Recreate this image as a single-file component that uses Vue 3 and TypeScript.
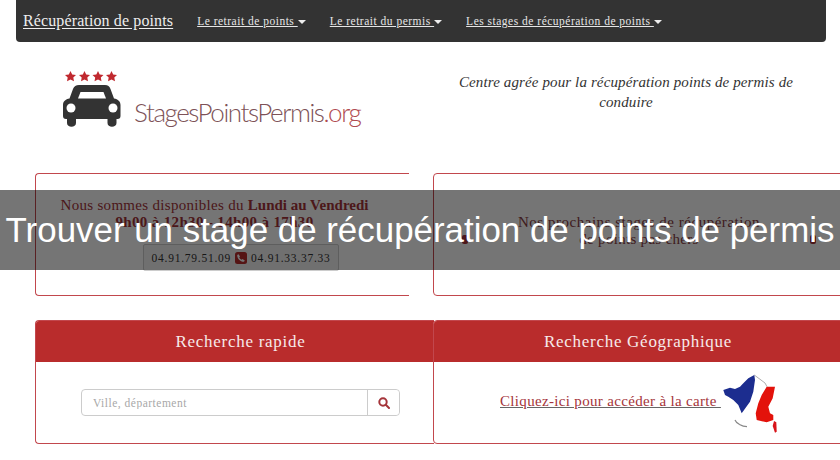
<script setup lang="ts">
const navItems: string[] = ['Le retrait de points', 'Le retrait du permis', 'Les stages de récupération de points']
</script>

<template>
  <div class="page">
    <nav class="navbar">
      <a class="brand">Récupération de points</a>
      <div v-for="item in navItems" :key="item" class="nav-item">
        <a>{{ item }}&nbsp;</a><span class="caret"></span>
      </div>
    </nav>

    <header class="head">
      <div class="logo">
        <svg class="car" width="60" height="60" viewBox="0 0 60 60">
          <g fill="#c0292f">
            <polygon v-for="x in [8.5, 22.5, 36, 49.5]" :key="x" :points="`${x},0 ${x+1.7},3.500 ${x+5.5},4 ${x+2.8},6.500 ${x+3.500},10.300 ${x},8.500 ${x-3.500},10.300 ${x-2.8},6.500 ${x-5.5},4 ${x-1.7},3.500`" />
          </g>
          <path fill="#333" d="M17 14h26c3 0 4.500 1.500 5.500 4l3.500 9.500c4 .8 6.500 3 6.500 6.500v11c0 2-1 3-3 3h-1v4c0 5-9 5-9 0v-4H14v4c0 5-9 5-9 0v-4H4c-2 0-3-1-3-3V34c0-3.500 2.500-5.700 6.500-6.500L11 18c1-2.500 3-4 6-4z" />
          <path fill="#fff" d="M18.500 21h23l2.500 6.500H16z" />
          <circle cx="9" cy="37" r="4.500" fill="#fff" />
          <circle cx="51" cy="37" r="4.500" fill="#fff" />
        </svg>
        <span class="logo-text">StagesPointsPermis<em>.org</em></span>
      </div>
      <p class="tagline">Centre agrée pour la récupération points de permis de conduire</p>
    </header>

    <section class="row first">
      <div class="panel info left">
        <h2>Nous sommes disponibles du <b>Lundi au Vendredi</b><br /><span class="hours">9h00 à 12h30 - 14h00 à 17h30</span></h2>
        <div class="phones">
          04.91.79.51.09
          <svg width="12" height="12" viewBox="0 0 12 12">
            <rect width="12" height="12" rx="2.500" fill="#b92c2c" />
            <path fill="#fff" d="M3.500 2.200 5 4.500 4.200 5.500c.5 1 1.300 1.800 2.300 2.300l1-.8 2.300 1.500-.8 1.300C5.500 10 2 6.500 2.200 3z" />
          </svg>
          04.91.33.37.33
        </div>
      </div>
      <div class="panel info right">
        <h2>Nos prochains stages de récupération</h2>
        <div class="second-line">
          <i class="mark"></i>
          <span>de points pas chers</span>
          <i class="mark"></i>
        </div>
      </div>
    </section>

    <section class="row second">
      <div class="panel search left">
        <div class="panel-head">Recherche rapide</div>
        <div class="panel-body">
          <div class="input-group">
            <input class="field" placeholder="Ville, département" />
            <button class="go" aria-label="Rechercher">
              <svg width="12" height="12" viewBox="0 0 12 12" fill="none" stroke="#a5343a" stroke-width="2">
                <circle cx="5" cy="5" r="3.700" /><path d="m7.800 7.800 3.200 3.200" stroke-linecap="round" />
              </svg>
            </button>
          </div>
        </div>
      </div>
      <div class="panel search right">
        <div class="panel-head">Recherche Géographique</div>
        <div class="panel-body map-body">
          <a class="map-link">Cliquez-ici pour accéder à la carte&nbsp;</a>
          <svg class="france" width="58" height="62" viewBox="0 0 58 62">
            <path fill="none" stroke="#999" stroke-width=".8" d="M32.300 1 43 9l2 3.700" />
            <path fill="#1c2d8f" d="M1.300 16 8 13.700l5 1.300 5-2.300 3.300-3.400 5-5L32.300 1l.7 5-1.700 11.700-3.300 10-8.300 11.600-3.400-8.300-5-5-5-3.300L3 21z" />
            <path fill="#e3120b" d="M44.700 12.700H53l-2.300 11.600-4.400 8.400 1.700 6.600 3.300 1.700V46l-6.600 2.300-10-2.300-1-6.700 2.600-10 3.400-8.300z" />
            <path fill="none" stroke="#888" stroke-width="1.200" d="M13 46c1 2.500 3 3.500 4.500 4.500 2.500 1.500 5 2.200 7.500 2.200" />
            <path fill="#d8141a" d="m52 47 2.300 1.300.4 9.400-1.700 1-2.300-6.700z" />
          </svg>
        </div>
      </div>
    </section>

    <div class="overlay">Trouver un stage de récupération de points de permis</div>
  </div>
</template>

<style>
html, body { margin: 0; background: #fff; overflow: hidden; }
</style>

<style scoped>
.page {
  position: relative;
  width: 840px;
  height: 460px;
  overflow: hidden;
  font-family: "Liberation Serif", serif;
  color: #333;
  background: #fff;
}
.navbar {
  display: flex;
  align-items: center;
  height: 42px;
  margin: 0 14px 0 16px;
  padding: 0 0 0 7px;
  box-sizing: border-box;
  background: #333;
  border-radius: 0 0 4px 4px;
  color: #e6e6e6;
}
.brand {
  font-size: 16px;
  letter-spacing: .12px;
  text-decoration: underline;
  text-underline-offset: 2px;
  margin-right: 24px;
  color: #eee;
}
.nav-item {
  display: flex;
  align-items: center;
  font-size: 11.500px;
  letter-spacing: .5px;
  margin-right: 24px;
}
.nav-item a { text-decoration: underline; }
.caret {
  width: 0;
  height: 0;
  border-top: 4px solid #eee;
  border-left: 4px solid transparent;
  border-right: 4px solid transparent;
  margin-top: 2px;
}
.head { display: flex; height: 131px; }
.logo {
  display: flex;
  align-items: flex-start;
  flex: none;
  width: 420px;
  box-sizing: border-box;
  padding: 29px 0 0 62px;
}
.car { flex: none; }
.logo-text {
  font-family: Lato, sans-serif;
  font-weight: 300;
  font-size: 26px;
  letter-spacing: -1.42px;
  color: #7d5257;
  margin: 25px 0 0 12px;
}
.logo-text em { font-style: normal; color: #b04a50; }
.tagline {
  width: 350px;
  margin: 30px 0 0 31px;
  font-style: italic;
  font-size: 15px;
  line-height: 20px;
  letter-spacing: .12px;
  text-align: center;
  color: #333;
}
.row { display: flex; padding-left: 35px; }
.first { height: 123px; margin-bottom: 24px; }
.panel {
  box-sizing: border-box;
  border: 1px solid #c2474d;
  border-radius: 4px;
  background: #fff;
  flex: none;
}
.info.left {
  width: 374px;
  border-right: 0;
  border-top-right-radius: 0;
  border-bottom-right-radius: 0;
  margin-right: 24px;
  text-align: center;
  padding-top: 23px;
}
.info.right { width: 430px; }
.info h2 {
  margin: 0;
  font-size: 15px;
  font-weight: 400;
  line-height: 17px;
  color: #a5343a;
}
.info.left h2 { padding-right: 16px; letter-spacing: .3px; }
.info.left h2 b { letter-spacing: 0; }
.hours { font-weight: 700; letter-spacing: .35px; }
.info.right h2 { margin: 40px 0 0; width: 410px; text-align: center; color: #8a3c42; letter-spacing: .52px; }
.second-line {
  display: flex;
  justify-content: space-between;
  align-items: center;
  width: 354px;
  height: 16px;
  margin: 0 0 0 28px;
  font-size: 15px;
  letter-spacing: .3px;
  color: #8a3c42;
}
.mark { display: block; width: 6px; height: 9px; background: #a5343a; border-radius: 2px; }
.phones {
  display: flex;
  align-items: center;
  justify-content: center;
  gap: 4px;
  width: 196px;
  height: 27px;
  margin: 13px 0 0 107px;
  box-sizing: border-box;
  background: #f5f5f5;
  border: 1px solid #ccc;
  border-radius: 2px;
  font-size: 11.500px;
  letter-spacing: .75px;
  color: #333;
}
.second { height: 124px; }
.search { overflow: hidden; }
.search.left { width: 399px; border-right: 0; border-top-right-radius: 0; border-bottom-right-radius: 0; }
.search.right { width: 430px; margin-left: -1px; border-top-right-radius: 0; }
.panel-head {
  height: 41px;
  background: #b92c2c;
  color: #f6e9e9;
  font-size: 17px;
  letter-spacing: .72px;
  line-height: 41px;
  text-align: center;
}
.search.left .panel-head { padding-left: 11px; }
.search.right .panel-head { width: 408px; }
.panel-body { display: flex; height: 81px; box-sizing: border-box; }
.input-group {
  display: flex;
  width: 319px;
  height: 27px;
  margin: 27px 0 0 45px;
  border: 1px solid #ccc;
  border-radius: 4px;
  box-sizing: border-box;
}
.field {
  flex: 1;
  min-width: 0;
  border: 0;
  outline: 0;
  padding: 0 11px;
  background: transparent;
  font-family: inherit;
  font-size: 11.500px;
  letter-spacing: .5px;
}
.field::placeholder { color: #a8a8a8; opacity: 1; }
.go {
  display: flex;
  align-items: center;
  justify-content: center;
  width: 32px;
  padding: 0;
  background: #fff;
  border: 0;
  border-left: 1px solid #ccc;
  border-radius: 0 4px 4px 0;
}
.map-body { align-items: flex-start; padding: 12px 0 0 66px; }
.map-link {
  margin-top: 19px;
  font-size: 15px;
  letter-spacing: .33px;
  color: #a5343a;
  text-decoration: underline;
  text-decoration-color: #666;
}
.france { flex: none; margin-left: 1px; }
.overlay {
  position: absolute;
  left: 0;
  top: 190px;
  width: 100%;
  height: 80px;
  background: rgba(0, 0, 0, .54);
  color: #fff;
  font-family: "Liberation Sans", sans-serif;
  font-size: 34.900px;
  line-height: 80px;
  text-align: center;
  white-space: nowrap;
}
</style>
